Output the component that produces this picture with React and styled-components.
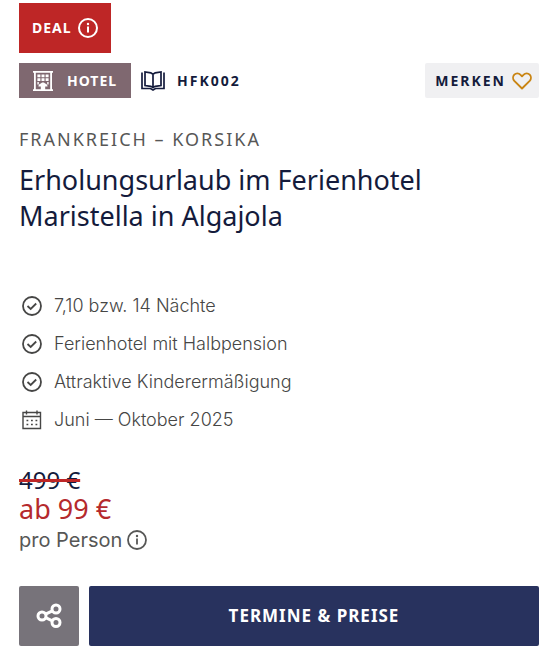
import React, { useState } from "react";
import styled, { createGlobalStyle } from "styled-components";

const GlobalStyle = createGlobalStyle`
  * {
    box-sizing: border-box;
  }
  body {
    margin: 0;
    background: #fff;
    color: #575756;
    font-family: Inter, "Liberation Sans", sans-serif;
  }
  button {
    border: none;
    padding: 0;
    cursor: pointer;
  }
  svg {
    display: block;
    flex: none;
  }
`;

const Card = styled.article`
  display: flex;
  flex-direction: column;
  padding: 3px 19px 14px;
`;

const DealButton = styled.button`
  display: flex;
  align-items: center;
  align-self: flex-start;
  gap: 6px;
  height: 50px;
  padding: 0 13px;
  background: #be2626;
  color: #fff;
  font: 700 14px/20px "Noto Sans", sans-serif;
  letter-spacing: 1px;
`;

const MetaRow = styled.div`
  display: flex;
  align-items: center;
  gap: 10px;
  margin-top: 10px;
`;

const Tag = styled.span`
  display: flex;
  align-items: center;
  gap: ${({ $filled }) => ($filled ? "14px" : "12px")};
  height: 35px;
  padding: ${({ $filled }) => ($filled ? "0 14px" : "0")};
  background: ${({ $filled }) => ($filled ? "#7f6870" : "transparent")};
  color: ${({ $filled }) => ($filled ? "#fff" : "#141b3c")};
  font: 700 14px/20px "Noto Sans", sans-serif;
  letter-spacing: ${({ $filled }) => ($filled ? "1px" : "2px")};
`;

const SaveButton = styled.button`
  display: flex;
  align-items: center;
  gap: 6px;
  height: 35px;
  margin-left: auto;
  padding: 0 7px 0 10px;
  border-radius: 2px;
  background: #f0f0f2;
  color: #141b3c;
  font: 700 14px/20px "Noto Sans", sans-serif;
  letter-spacing: 2px;
`;

const Region = styled.p`
  margin: 29px 0 0;
  font: 400 18px/24px "Noto Sans", sans-serif;
  letter-spacing: 2px;
`;

const Title = styled.h1`
  max-width: 440px;
  margin: 11px 0 0;
  color: #141b3c;
  font: 400 27px/36px "Noto Sans", sans-serif;
`;

const Facts = styled.ul`
  margin: 53px 0 0;
  padding: 0;
  list-style: none;
`;

const Fact = styled.li`
  display: flex;
  align-items: center;
  gap: 10px;
  height: 38px;
  color: #464645;
  font-size: 18px;
  font-weight: 300;
  line-height: 24px;
`;

const Prices = styled.div`
  display: flex;
  flex-direction: column;
  align-items: flex-start;
  margin-top: 27px;
`;

const OldPrice = styled.del`
  color: #141b3c;
  font: 400 24px/28px "Noto Sans", sans-serif;
  text-decoration: line-through 3px #be2626;
`;

const Price = styled.strong`
  color: #b52a2d;
  font: 400 27px/30px "Noto Sans", sans-serif;
`;

const PerPerson = styled.div`
  display: flex;
  align-items: center;
  gap: 5px;
  margin-top: 1px;
  font-size: 20px;
  line-height: 30px;
`;

const InfoButton = styled.button`
  background: none;
  color: inherit;
`;

const Actions = styled.div`
  display: flex;
  gap: 10px;
  margin-top: 31px;
`;

const ShareButton = styled.button`
  display: flex;
  align-items: center;
  justify-content: center;
  width: 60px;
  height: 60px;
  border-radius: 2px;
  background: #77737a;
  color: #fff;
`;

const BookingLink = styled.a`
  display: flex;
  flex: 1;
  align-items: center;
  justify-content: center;
  height: 60px;
  border-radius: 2px;
  background: #28325e;
  color: #fff;
  font: 700 17px/24px "Noto Sans", sans-serif;
  letter-spacing: 1px;
  text-decoration: none;
`;

const InfoIcon = ({ stroke = 1.8 }) => (
  <svg width="20" height="20" viewBox="0 0 20 20" fill="none" stroke="currentColor" strokeWidth={stroke}>
    <circle cx="10" cy="10" r="9" />
    <path d="M10 8.5v6" />
    <circle cx="10" cy="6" r="1.2" fill="currentColor" stroke="none" />
  </svg>
);

const HotelIcon = () => (
  <svg width="20" height="20" viewBox="1 0 20 20" fill="currentColor">
    <path d="M1 0h20v1.8H1zM1 18.3h20V20H1zM2 1h1.8v18H2zM18.2 1H20v18h-1.8z" />
    <path d="M5.4 3.5h3v2.7h-3zM9.5 3.5h3v2.7h-3zM13.6 3.5h3v2.7h-3zM5.4 7.2h3v2.7h-3zM9.5 7.2h3v2.7h-3zM13.6 7.2h3v2.7h-3zM5.4 11h1.4v2.4H5.4zM15.2 11h1.4v2.4h-1.4z" />
    <path d="M6.4 15.6c0-2 1.3-3 2.6-3.2.6-1.3 3.4-1.3 4 0 1.3.2 2.6 1.2 2.6 3.2h-2.4v3.5H8.800v-3.500z" />
  </svg>
);

const BookIcon = () => (
  <svg width="24" height="20" viewBox="0 0 24 20" fill="none" stroke="currentColor" strokeWidth="1.7">
    <path d="M12 3.2 9.8 1.8 4 1v13.5l5.8.8L12 16.5l2.2-1.2 5.8-.8V1l-5.8.8zM12 3.2v13" />
    <path d="M1 1.5v15.8l8.5.2L12 19l2.5-1.5 8.5-.2V1.5" />
  </svg>
);

const HeartIcon = () => (
  <svg width="20" height="18" viewBox="0 0 20 18" fill="none" stroke="#c98412" strokeWidth="1.9" strokeLinejoin="round">
    <path d="M10 16.5 2.3 8.8C.7 7.1.7 4.3 2.3 2.6c1.7-1.7 4.4-1.7 6 0L10 4.3l1.7-1.700c1.600-1.700 4.300-1.700 6 0 1.600 1.700 1.600 4.500 0 6.200z" />
  </svg>
);

const CheckIcon = () => (
  <svg width="20" height="20" viewBox="0 0 20 20" fill="none" stroke="currentColor" strokeWidth="1.8">
    <circle cx="10" cy="10" r="9" />
    <path d="m5.5 10 3.2 3 5.5-5.5" />
  </svg>
);

const CalendarIcon = () => (
  <svg width="20" height="20" viewBox="0 0 20 20" fill="none" stroke="currentColor" strokeWidth="1.4">
    <path d="M1 2.5h17.5v16H1zM1 6.5h17.5M4.5.5v4M15 .5v4" />
    <path d="M4.5 10.5h12M4.5 14.5h12" strokeWidth="1.6" strokeDasharray="1.8 2.7" />
  </svg>
);

const ShareIcon = () => (
  <svg width="26" height="26" viewBox="0 0 26 26" fill="none" stroke="currentColor" strokeWidth="3">
    <circle cx="6" cy="13" r="4" />
    <circle cx="20" cy="6" r="4" />
    <circle cx="20" cy="19.5" r="4" />
    <path d="m9.6 11.2 6.8-3.4M9.6 14.7l6.8 3.2" />
  </svg>
);

const facts = [
  { text: "7,10 bzw. 14 Nächte", icon: CheckIcon },
  { text: "Ferienhotel mit Halbpension", icon: CheckIcon },
  { text: "Attraktive Kinderermäßigung", icon: CheckIcon },
  { text: "Juni — Oktober 2025", icon: CalendarIcon },
];

const FactIcon = styled.span`
  display: flex;
  justify-content: center;
  width: 25px;
`;

function App() {
  const [saved, setSaved] = useState(false);

  return (
    <>
      <GlobalStyle />
      <Card>
        <DealButton type="button">
          DEAL
          <InfoIcon stroke={2} />
        </DealButton>
        <MetaRow>
          <Tag $filled>
            <HotelIcon />
            HOTEL
          </Tag>
          <Tag>
            <BookIcon />
            HFK002
          </Tag>
          <SaveButton type="button" aria-pressed={saved} onClick={() => setSaved(!saved)}>
            MERKEN
            <HeartIcon />
          </SaveButton>
        </MetaRow>
        <Region>FRANKREICH – KORSIKA</Region>
        <Title>Erholungsurlaub im Ferienhotel Maristella in Algajola</Title>
        <Facts>
          {facts.map(({ text, icon: Icon }) => (
            <Fact key={text}>
              <FactIcon>
                <Icon />
              </FactIcon>
              {text}
            </Fact>
          ))}
        </Facts>
        <Prices>
          <OldPrice>499 €</OldPrice>
          <Price>ab 99 €</Price>
          <PerPerson>
            pro Person
            <InfoButton type="button" aria-label="Preisinformation">
              <InfoIcon />
            </InfoButton>
          </PerPerson>
        </Prices>
        <Actions>
          <ShareButton type="button" aria-label="Teilen">
            <ShareIcon />
          </ShareButton>
          <BookingLink href="#termine">TERMINE &amp; PREISE</BookingLink>
        </Actions>
      </Card>
    </>
  );
}

export default App;
